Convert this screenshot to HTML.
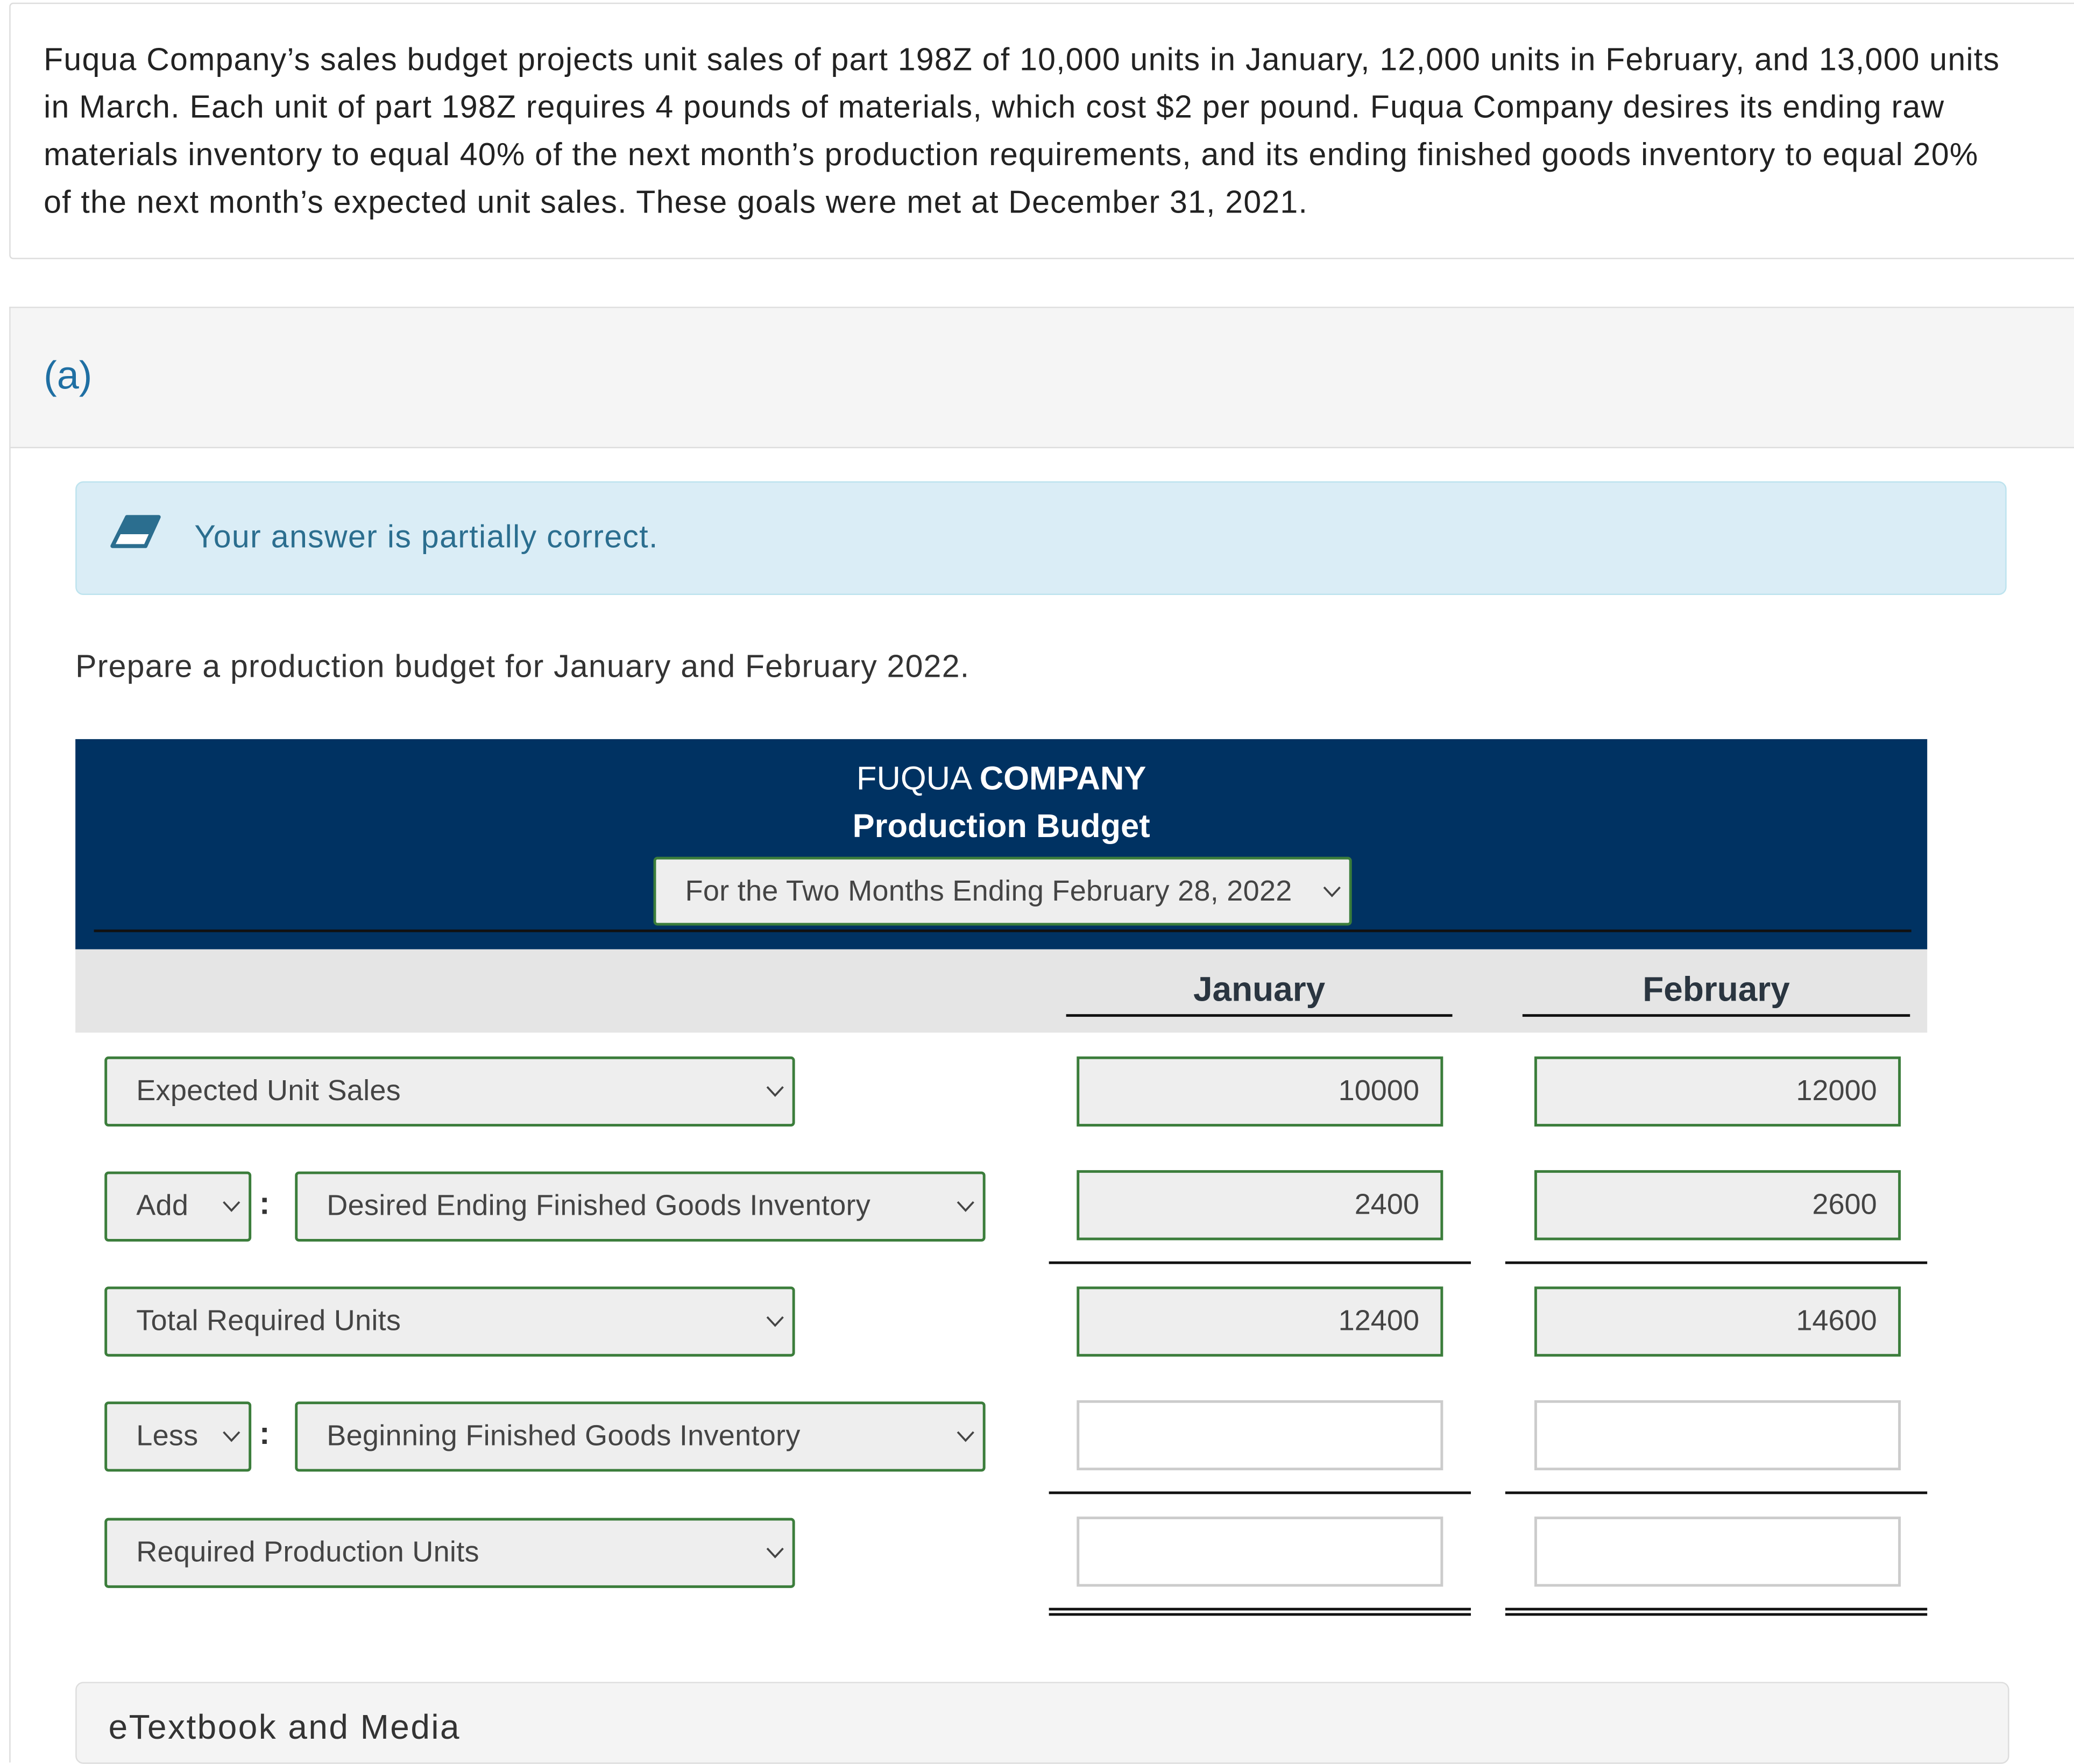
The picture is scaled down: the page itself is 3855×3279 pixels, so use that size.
<!DOCTYPE html>
<html><head><meta charset="utf-8"><style>
html,body{margin:0;padding:0;background:#fff;width:3855px;height:3200px;overflow:hidden}
#w{position:absolute;left:0;top:0;width:1568px;height:1302px;transform:scale(2.4586,2.4578);transform-origin:0 0;font-family:"Liberation Sans",sans-serif;color:#333}
.a{position:absolute}
.t{white-space:nowrap}
.sel{position:absolute;background:#eee;border:2px solid #3b7d3b;border-radius:3px;box-sizing:border-box;font-size:22px;color:#444;line-height:48px;padding-left:22px;white-space:nowrap;letter-spacing:0.1px}
.sel svg{position:absolute;right:6px;top:20px}
.inp{position:absolute;background:#eee;border:2px solid #3b7d3b;box-sizing:border-box;font-size:22px;color:#444;line-height:48px;text-align:right;padding-right:16px;width:277px;height:53px}
.emp{background:#fff;border:2px solid #ccc}
.ln{position:absolute;height:2px;background:#111}
</style></head><body><div id="w">
<div class="a" style="left:7px;top:2px;width:1570px;height:192px;border:1px solid #ddd;border-radius:3px"></div>
<div class="a t" style="left:33px;top:28px;font-size:24px;letter-spacing:0.5px;line-height:36px;color:#222">Fuqua Company’s sales budget projects unit sales of part 198Z of 10,000 units in January, 12,000 units in February, and 13,000 units<br>in March. Each unit of part 198Z requires 4 pounds of materials, which cost $2 per pound. Fuqua Company desires its ending raw<br>materials inventory to equal 40% of the next month’s production requirements, and its ending finished goods inventory to equal 20%<br>of the next month’s expected unit sales. These goals were met at December 31, 2021.</div>
<div class="a" style="left:7px;top:232px;width:1570px;height:1100px;border-left:1px solid #ddd;border-top:1px solid #ddd"></div>
<div class="a" style="left:8px;top:233px;width:1570px;height:105px;background:#f5f5f5;border-bottom:1px solid #ddd"></div>
<div class="a t" style="left:33px;top:268px;font-size:30px;color:#1f6fa3">(a)</div>
<div class="a" style="left:57px;top:364px;width:1460px;height:86px;background:#daedf6;border:1px solid #bde3ee;border-radius:6px;box-sizing:border-box"></div>
<svg class="a" style="left:82px;top:389px" width="40" height="28" viewBox="0 0 40 28"><path d="M14 2 L38 2 L28 24 L3 24 Z" fill="#fff" stroke="#2b6e8f" stroke-width="3" stroke-linejoin="round"/><path d="M14 2 L38 2 L32 15 L8 15 Z" fill="#2b6e8f"/></svg>
<div class="a t" style="left:147px;top:393px;font-size:24px;letter-spacing:0.55px;color:#2b6e8f">Your answer is partially correct.</div>
<div class="a t" style="left:57px;top:491px;font-size:24px;letter-spacing:0.5px;color:#333">Prepare a production budget for January and February 2022.</div>
<div class="a" style="left:57px;top:559px;width:1400px;height:159px;background:#003262"></div>
<div class="a t" style="left:57px;width:1400px;top:575px;text-align:center;font-size:25px;color:#fff">FUQUA <b>COMPANY</b></div>
<div class="a t" style="left:57px;width:1400px;top:611px;text-align:center;font-size:25px;color:#fff;font-weight:bold">Production Budget</div>
<div class="sel" style="left:494px;top:648px;width:528px;height:52px;font-size:22px;line-height:48px">For the Two Months Ending February 28, 2022<svg width="14" height="9" viewBox="0 0 14 9"><path d="M1 1 L7 7.5 L13 1" fill="none" stroke="#444" stroke-width="1.5"/></svg></div>
<div class="ln" style="left:71px;top:703px;width:1374px"></div>
<div class="a" style="left:57px;top:718px;width:1400px;height:63px;background:#e5e5e5"></div>
<div class="a t" style="left:806px;width:292px;top:733px;text-align:center;font-size:26px;font-weight:bold;color:#2a3540">January</div>
<div class="a t" style="left:1151px;width:293px;top:733px;text-align:center;font-size:26px;font-weight:bold;color:#2a3540">February</div>
<div class="ln" style="left:806px;top:767px;width:292px"></div>
<div class="ln" style="left:1151px;top:767px;width:293px"></div>

<div class="sel" style="left:79px;top:799px;width:522px;height:53px">Expected Unit Sales<svg width="14" height="9" viewBox="0 0 14 9"><path d="M1 1 L7 7.5 L13 1" fill="none" stroke="#444" stroke-width="1.5"/></svg></div>
<div class="inp" style="left:814px;top:799px">10000</div>
<div class="inp" style="left:1160px;top:799px">12000</div>

<div class="sel" style="left:79px;top:886px;width:111px;height:53px">Add<svg width="14" height="9" viewBox="0 0 14 9"><path d="M1 1 L7 7.5 L13 1" fill="none" stroke="#444" stroke-width="1.5"/></svg></div>
<div class="a" style="left:196px;top:897px;font-size:24px;font-weight:bold">:</div>
<div class="sel" style="left:223px;top:886px;width:522px;height:53px">Desired Ending Finished Goods Inventory<svg width="14" height="9" viewBox="0 0 14 9"><path d="M1 1 L7 7.5 L13 1" fill="none" stroke="#444" stroke-width="1.5"/></svg></div>
<div class="inp" style="left:814px;top:885px">2400</div>
<div class="inp" style="left:1160px;top:885px">2600</div>
<div class="ln" style="left:793px;top:954px;width:319px"></div>
<div class="ln" style="left:1138px;top:954px;width:319px"></div>

<div class="sel" style="left:79px;top:973px;width:522px;height:53px">Total Required Units<svg width="14" height="9" viewBox="0 0 14 9"><path d="M1 1 L7 7.5 L13 1" fill="none" stroke="#444" stroke-width="1.5"/></svg></div>
<div class="inp" style="left:814px;top:973px">12400</div>
<div class="inp" style="left:1160px;top:973px">14600</div>

<div class="sel" style="left:79px;top:1060px;width:111px;height:53px">Less<svg width="14" height="9" viewBox="0 0 14 9"><path d="M1 1 L7 7.5 L13 1" fill="none" stroke="#444" stroke-width="1.5"/></svg></div>
<div class="a" style="left:196px;top:1071px;font-size:24px;font-weight:bold">:</div>
<div class="sel" style="left:223px;top:1060px;width:522px;height:53px">Beginning Finished Goods Inventory<svg width="14" height="9" viewBox="0 0 14 9"><path d="M1 1 L7 7.5 L13 1" fill="none" stroke="#444" stroke-width="1.5"/></svg></div>
<div class="inp emp" style="left:814px;top:1059px"></div>
<div class="inp emp" style="left:1160px;top:1059px"></div>
<div class="ln" style="left:793px;top:1128px;width:319px"></div>
<div class="ln" style="left:1138px;top:1128px;width:319px"></div>

<div class="sel" style="left:79px;top:1148px;width:522px;height:53px">Required Production Units<svg width="14" height="9" viewBox="0 0 14 9"><path d="M1 1 L7 7.5 L13 1" fill="none" stroke="#444" stroke-width="1.5"/></svg></div>
<div class="inp emp" style="left:814px;top:1147px"></div>
<div class="inp emp" style="left:1160px;top:1147px"></div>
<div class="ln" style="left:793px;top:1216px;width:319px"></div>
<div class="ln" style="left:793px;top:1220px;width:319px"></div>
<div class="ln" style="left:1138px;top:1216px;width:319px"></div>
<div class="ln" style="left:1138px;top:1220px;width:319px"></div>

<div class="a" style="left:57px;top:1272px;width:1460px;height:60px;background:#f4f4f4;border:1px solid #ddd;border-radius:6px"></div>
<div class="a t" style="left:82px;top:1291px;font-size:26px;letter-spacing:1px;color:#333">eTextbook and Media</div>
</div></body></html>
